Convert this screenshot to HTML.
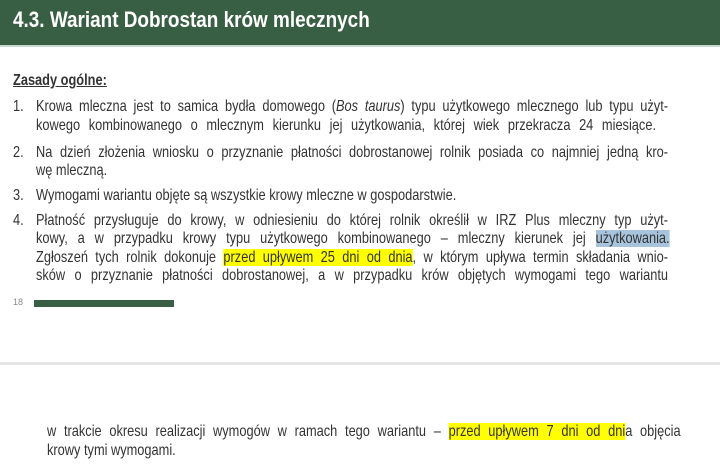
<!DOCTYPE html>
<html><head><meta charset="utf-8"><style>
body{margin:0;width:720px;height:468px;background:#fff;font-family:"Liberation Sans",sans-serif;color:#333;position:relative;overflow:hidden}
.hdr{position:absolute;left:0;top:0;width:720px;height:45px;background:#385f43;border-bottom:2px solid #c9d6cc}
.hdr div{position:absolute;left:13px;top:7px;color:#fff;font-weight:bold;font-size:22px;transform:scaleX(0.86);transform-origin:left;white-space:nowrap}
.l{position:absolute;font-size:16px;white-space:nowrap;line-height:18px;transform:scaleX(0.8);transform-origin:left top}
.j{text-align:justify;text-align-last:justify;white-space:normal}
.n{position:absolute;font-size:16px;left:13px;line-height:18px;transform:scaleX(0.8);transform-origin:left top}
.hy{background:#ffff00}
.hb{background:#a8c4dd}
</style></head><body>
<div class="hdr"><div>4.3. Wariant Dobrostan krów mlecznych</div></div>
<div class="l" style="left:13px;top:72px;font-weight:bold;text-decoration:underline">Zasady ogólne:</div>
<div class="n" style="top:98px">1.</div>
<div class="l j" style="left:36px;top:98px;width:790px">Krowa mleczna jest to samica bydła domowego (<i>Bos taurus</i>) typu użytkowego mlecznego lub typu użyt-</div>
<div class="l j" style="left:36px;top:117px;width:775px">kowego kombinowanego o mlecznym kierunku jej użytkowania, której wiek przekracza 24 miesiące.</div>
<div class="n" style="top:144px">2.</div>
<div class="l j" style="left:36px;top:144px;width:790px">Na dzień złożenia wniosku o przyznanie płatności dobrostanowej rolnik posiada co najmniej jedną kro-</div>
<div class="l" style="left:36px;top:162px">wę mleczną.</div>
<div class="n" style="top:187px">3.</div>
<div class="l" style="left:36px;top:187px">Wymogami wariantu objęte są wszystkie krowy mleczne w gospodarstwie.</div>
<div class="n" style="top:212px">4.</div>
<div class="l j" style="left:36px;top:212px;width:790px">Płatność przysługuje do krowy, w odniesieniu do której rolnik określił w IRZ Plus mleczny typ użyt-</div>
<div class="l j" style="left:36px;top:230px;width:792px">kowy, a w przypadku krowy typu użytkowego kombinowanego – mleczny kierunek jej <span class="hb">użytkowania.</span></div>
<div class="l j" style="left:36px;top:249px;width:790px">Zgłoszeń tych rolnik dokonuje <span class="hy">przed upływem 25 dni od dnia</span>, w którym upływa termin składania wnio-</div>
<div class="l j" style="left:36px;top:267px;width:790px">sków o przyznanie płatności dobrostanowej, a w przypadku krów objętych wymogami tego wariantu</div>
<div style="position:absolute;left:13px;top:297px;font-size:9px;color:#888">18</div>
<div style="position:absolute;left:34px;top:300px;width:140px;height:7px;background:#385f43"></div>
<div style="position:absolute;left:0;top:362px;width:720px;height:3px;background:#e6e6e6"></div>
<div class="l j" style="left:47px;top:423px;width:792px">w trakcie okresu realizacji wymogów w ramach tego wariantu – <span class="hy">przed upływem 7 dni od dni</span>a objęcia</div>
<div class="l" style="left:47px;top:442px">krowy tymi wymogami.</div>
</body></html>
